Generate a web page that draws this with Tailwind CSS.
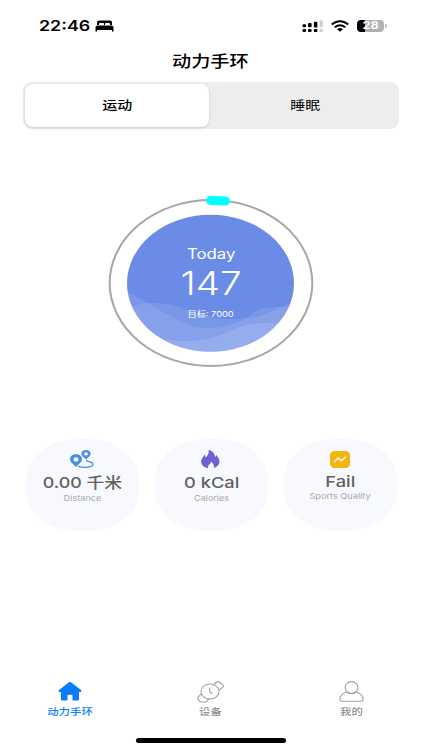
<!DOCTYPE html>
<html lang="zh-CN">
<head>
<meta charset="utf-8">
<meta name="viewport" content="width=device-width, initial-scale=1">
<title>动力手环</title>
<script src="https://cdn.jsdelivr.net/npm/@tailwindcss/browser@4"></script>
</head>
<body class="bg-white">
<div class="flex h-[750px] w-[422px] flex-col overflow-hidden bg-white font-['Inter','Noto_Sans_CJK_SC',sans-serif] text-black">
  <!-- Status bar -->
  <header class="flex h-[52px] shrink-0 items-center justify-between pr-[35px] pl-[39px]">
    <div class="flex items-center gap-[5px]">
      <span class="w-[51px] origin-left scale-x-[1.19] text-[15px] leading-[20px] font-semibold whitespace-nowrap">22:46</span>
      <svg class="h-[12px] w-[19px]" viewBox="0 0 19 12"><path d="M2 5V2.200Q2 .5 4 .5h11Q17 .5 17 2.200V5h-2V3.800Q15 3 14 3h-3q-1 0-1 .8V5H9V3.800Q9 3 8 3H5q-1 0-1 .8V5z"/><path d="M.5 11.400V7.500Q.5 5.500 2.500 5.500h14q2 0 2 2v3.900h-1.500V10H2v1.400z"/></svg>
    </div>
    <div class="flex items-center gap-[8px]">
      <svg class="h-[13px] w-[21px]" viewBox="0 0 21 13"><g><rect x=".5" y="9" width="3.600" height="3" rx="1"/><rect x="6" y="9" width="3.600" height="3" rx="1"/><rect x="11.800" y="9" width="3.600" height="3" rx="1"/><rect x=".5" y="4.300" width="3.600" height="3" rx="1"/><rect x="6" y="3" width="3.600" height="4.300" rx="1"/><rect x="11.800" y="1.800" width="3.600" height="5.700" rx="1"/></g><g fill="#cfcfcf"><rect x="17.500" y="9" width="3.400" height="3" rx="1"/><rect x="17.500" y=".3" width="3.400" height="7.200" rx="1"/></g></svg>
      <svg class="h-[12px] w-[18px]" viewBox="0 0 18 12"><g fill="none" stroke="#000" stroke-width="2"><path d="M.8 4.400Q9-2.200 17.200 4.400"/><path d="M3.700 7.300Q9 3.200 14.300 7.300"/></g><path d="M6 9.200Q9 7 12 9.200L9 11.800z"/></svg>
      <div class="flex items-center gap-px">
        <div class="flex h-[12px] w-[27px] items-center justify-center rounded-[4px] bg-linear-to-r from-black from-28% to-[#b1b1b1] to-28% pt-px"><span class="inline-block scale-x-[1.22] text-[10.500px] leading-none font-bold text-white">28</span></div>
        <div class="h-[4px] w-[2px] rounded-r-full bg-[#b9b9b9]"></div>
      </div>
    </div>
  </header>

  <h1 class="flex h-[30px] shrink-0 justify-center pr-[1px] text-[15.700px] leading-[19px] font-medium"><span class="inline-block scale-x-[1.22]">动力手环</span></h1>

  <!-- Segmented control -->
  <div class="mx-[23px] flex h-[47px] shrink-0 rounded-[9px] bg-[#ededef] p-[2px] text-[12.300px]">
    <button class="flex h-[43px] w-[184px] items-center justify-center rounded-[8px] bg-white pt-[2px] font-medium shadow-[0_1px_3px_#00000025]"><span class="inline-block scale-x-[1.22]">运动</span></button>
    <button class="flex flex-1 items-center justify-center pt-[2px] pl-[4px]"><span class="inline-block scale-x-[1.22]">睡眠</span></button>
  </div>

  <!-- Step gauge -->
  <main class="mt-[64px] grid h-[180px] shrink-0 place-items-center">
    <svg class="col-start-1 row-start-1 h-[180px] w-[220px]" viewBox="0 0 220 180">
      <defs><clipPath id="disc"><ellipse cx="109.500" cy="90.300" rx="83.500" ry="68.500"/></clipPath></defs>
      <ellipse cx="110" cy="90" rx="101.300" ry="83" fill="none" stroke="#a7a7a7" stroke-width="2"/>
      <path d="M109.500 7.400Q118 7.400 124.500 8" fill="none" stroke="#0ff" stroke-width="9" stroke-linecap="round"/>
      <g clip-path="url(#disc)">
        <path fill="#6a8ce6" d="M20 15h180v150H20z"/>
        <path fill="#fff" fill-opacity=".1" d="M20 97C43 105 51 114 66 121C80 129 90 135 106 135C122 135 133 131 142 127C151 122 155 116 164 115C174 113 186 115 200 113V165H20z"/>
        <path fill="#fff" fill-opacity=".1" d="M20 120C30 113 40 110 52 110C66 110 74 112 84 116C98 121 113 126 128 126C142 126 149 125 158 123C168 120 176 115 200 106V165H20z"/>
        <path fill="#fff" fill-opacity=".13" d="M20 134C36 137 45 141 52 143C65 147 72 148 84 148C97 148 104 146 113 144C126 140 132 135 143 133C154 130 160 130 170 130Q184 130 200 133V165H20z"/>
      </g>
    </svg>
    <div class="col-start-1 row-start-1 flex flex-col items-center text-white">
      <span class="mt-[-1px] scale-x-[1.2] text-[14px] leading-[20px]">Today</span>
      <span class="mt-[1px] scale-x-[1.17] text-[33px] leading-[36px] font-light">147</span>
      <span class="mt-[6px] scale-x-[1.18] text-[7.800px] leading-[14px]">目标: 7000</span>
    </div>
  </main>

  <!-- Metrics -->
  <section class="mt-[66px] flex shrink-0 gap-[16.500px] pl-[26px]">
    <article class="flex h-[92px] w-[112.500px] flex-col items-center rounded-[50px/41px] bg-[#f8f9fe] pt-[10px]">
      <svg class="h-[20px] w-[26px]" viewBox="0 0 26 20"><g fill="#4b90df"><path fill-rule="evenodd" d="M7 5.300c-3.400 0-6 2-6 4.900 0 3 3.500 5 6 7.700 2.500-2.700 6-4.700 6-7.700 0-2.900-2.600-4.900-6-4.900zm0 2.900a2.500 2.200 0 1 1 0 4.400 2.500 2.200 0 1 1 0-4.400z"/><path fill-rule="evenodd" d="M17 1c-2.700 0-4.700 1.500-4.700 3.800 0 2.400 2.700 3.600 4.700 5.700 2-2.100 4.700-3.300 4.700-5.700C21.700 2.500 19.700 1 17 1zm0 2.300a1.900 1.600 0 1 1 0 3.200 1.900 1.600 0 1 1 0-3.200z"/></g><path d="M17.500 11.800C20 13 24 13 24 15.200c0 2.200-4 3.100-8 3.100-2.500 0-5-.4-6.500-1" fill="none" stroke="#4b90df" stroke-width="1.300" stroke-linecap="round"/></svg>
      <strong class="mt-[4px] scale-x-[1.19] text-[15px] leading-[20px] font-medium whitespace-nowrap text-[#606060]">0.00 千米</strong>
      <span class="mt-px scale-x-[1.22] text-[7.500px] leading-[10px] whitespace-nowrap text-[#a6a7ac]">Distance</span>
    </article>
    <article class="flex h-[92px] w-[112.500px] flex-col items-center rounded-[50px/41px] bg-[#f8f9fe] pt-[10px]">
      <svg class="h-[20px] w-[20px]" viewBox="0 0 20 20"><path fill="#6c62d5" d="M7.500.8c4.500 1.500 6.600 4.300 6.300 7.300.8-.5 1.300-1.200 1.500-2.200 4.300 4.600 4.800 10.300-2.300 13.300.5-2.700-.8-5-3-6.700-.2 2-1.200 2.600-2 3.300-.9.900-1.100 2-.8 3.400C1.500 17.800-.7 14.300.5 10.800c.6-2 2.100-3.200 2.800-5 .8.700 1.200 1.600 1.200 2.600C6.900 6.800 8.200 3.700 7.500.8z"/></svg>
      <strong class="mt-[4px] scale-x-[1.22] text-[15px] leading-[20px] font-medium whitespace-nowrap text-[#606060]">0 kCal</strong>
      <span class="mt-px scale-x-[1.2] text-[7.500px] leading-[10px] whitespace-nowrap text-[#a6a7ac]">Calories</span>
    </article>
    <article class="flex h-[92px] w-[112.500px] flex-col items-center rounded-[50px/41px] bg-[#f8f9fe] pt-[12px]">
      <svg class="h-[17px] w-[20px]" viewBox="0 0 20 17"><rect width="20" height="17" rx="4.500" fill="#f6b40e"/><path d="M4.500 10.700 8.200 7l3.200 2.800 4.200-3.900" fill="none" stroke="#fff" stroke-width="1.400" stroke-linecap="round" stroke-linejoin="round"/></svg>
      <strong class="mt-[4px] scale-x-[1.22] text-[15px] leading-[20px] font-medium whitespace-nowrap text-[#606060]">Fail</strong>
      <span class="scale-x-[1.22] text-[7.500px] leading-[10px] whitespace-nowrap text-[#a6a7ac]">Sports Quality</span>
    </article>
  </section>

  <!-- Tab bar -->
  <nav class="mt-auto grid shrink-0 grid-cols-3 text-[9.500px] leading-[14px] font-medium text-[#909090]">
    <a class="flex flex-col items-center text-[#087cff]">
      <svg class="h-[24px] w-[28px]" viewBox="0 0 28 24"><path fill="currentColor" d="M13 1.300Q14 .5 15 1.300L25.300 9.300Q26 10.800 24.500 11H23v7.500Q23 19.500 21.800 19.500H16.500v-5q0-.8-.8-.8h-3.400q-.8 0-.8.8v5H6.200Q5 19.500 5 18.500V11H3.500Q2 10.800 2.700 9.300z"/></svg>
      <span class="scale-x-[1.2]">动力手环</span>
    </a>
    <a class="flex flex-col items-center">
      <svg class="h-[24px] w-[28px]" viewBox="0 1 28 24" fill="none" stroke="#a0a0a0" stroke-width="1.100"><ellipse cx="13" cy="11.500" rx="9" ry="7.500"/><path d="M12.700 7.500v4.300l2.500 2M16.300 4.700 20 1.800q1-.7 2 0l4 3.400q.8.700.1 1.700L22 10.200M4.500 13.700l-3.300 3.100q-.8.800-.3 2l1.600 2.300q.6.900 1.700.9h4.200q.8 0 1.400-.6l2-2.700"/></svg>
      <span class="scale-x-[1.2]">设备</span>
    </a>
    <a class="flex flex-col items-center">
      <svg class="h-[24px] w-[28px]" viewBox="1 1 28 24" fill="none" stroke="#a0a0a0" stroke-width="1.100"><ellipse cx="14.500" cy="7.500" rx="6.400" ry="5.900"/><path d="M9.600 12C5.500 13.500 2.900 16 2.900 19.300q0 1.900 2 1.900h19.200q2 0 2-1.900c0-3.300-2.600-5.800-6.700-7.300-2.600 2-7.200 2-9.800 0"/></svg>
      <span class="scale-x-[1.2]">我的</span>
    </a>
  </nav>
  <footer class="flex h-[31px] shrink-0 items-end justify-center pb-[7px]"><div class="h-[5px] w-[150px] rounded-full bg-black"></div></footer>
</div>
</body>
</html>
